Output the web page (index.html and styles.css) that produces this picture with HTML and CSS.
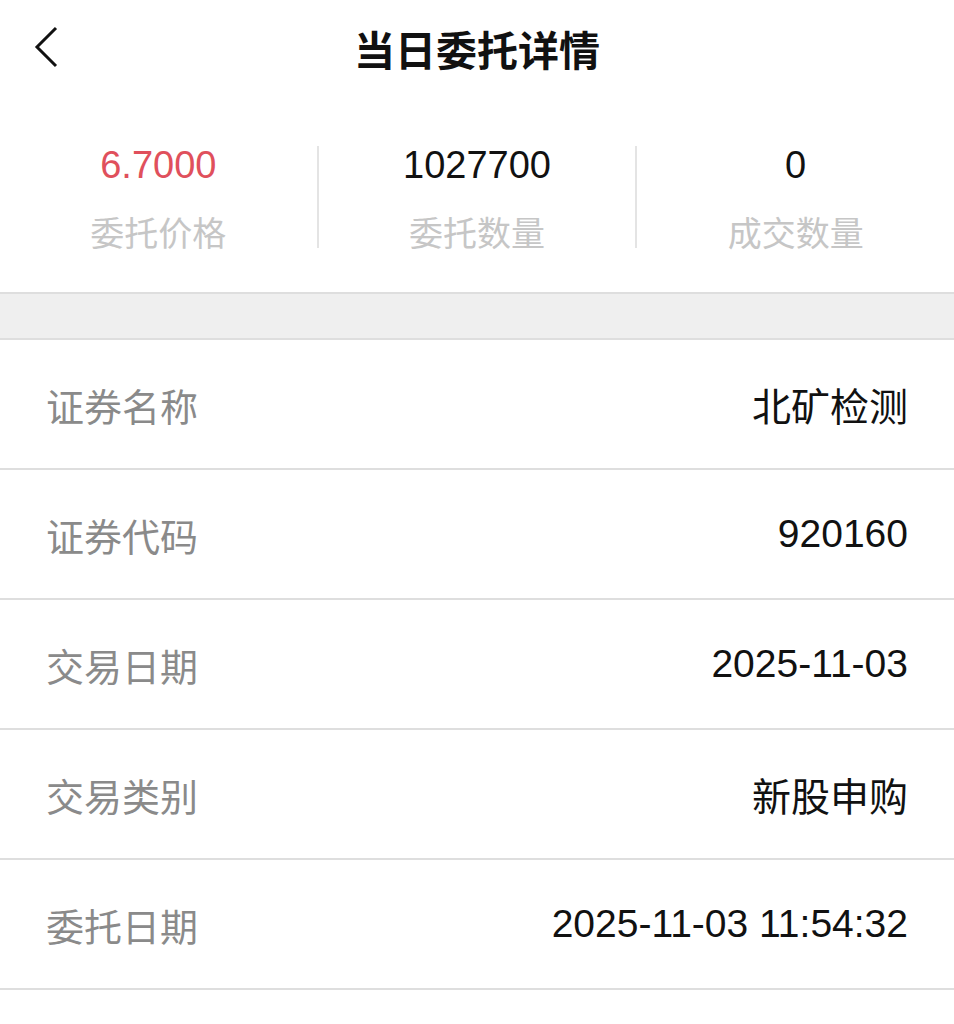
FILE: index.html
```html
<!DOCTYPE html>
<html lang="zh-CN">
<head>
  <meta charset="UTF-8">
  <link rel="stylesheet" href="styles.css">
</head>
<body>
  <div class="header">
    <span class="back">
      <svg width="26" height="42" viewBox="0 0 26 42"><polyline points="22,2 3,21 22,40" fill="none" stroke="#111" stroke-width="3"/></svg>
    </span>
    <h1>当日委托详情</h1>
  </div>

  <div class="summary">
    <div class="stat">
      <div class="num red">6.7000</div>
      <div class="cap">委托价格</div>
    </div>
    <div class="stat">
      <div class="num">1027700</div>
      <div class="cap">委托数量</div>
    </div>
    <div class="stat">
      <div class="num">0</div>
      <div class="cap">成交数量</div>
    </div>
  </div>

  <div class="band"></div>

  <div class="rows">
    <div class="row"><span class="label">证券名称</span><span class="value">北矿检测</span></div>
    <div class="row"><span class="label">证券代码</span><span class="value">920160</span></div>
    <div class="row"><span class="label">交易日期</span><span class="value">2025-11-03</span></div>
    <div class="row"><span class="label">交易类别</span><span class="value">新股申购</span></div>
    <div class="row"><span class="label">委托日期</span><span class="value">2025-11-03 11:54:32</span></div>
  </div>
</body>
</html>
```

FILE: styles.css
```css
body {
  margin: 0;
  background: #fff;
  font-family: "Liberation Sans", "Noto Sans CJK SC", sans-serif;
  color: #111;
}
.header {
  height: 96px;
  display: flex;
  align-items: center;
  justify-content: center;
  position: relative;
}
.back {
  position: absolute;
  left: 34px;
  top: 26px;
}
.header h1 {
  margin: 0;
  font-size: 41px;
  font-weight: bold;
  font-family: "Noto Sans CJK SC", sans-serif;
  color: #111;
}
.summary {
  display: flex;
  padding: 50px 0 44px;
}
.stat {
  flex: 1;
  text-align: center;
  border-left: 2px solid #e4e4e4;
  height: 102px;
}
.stat:first-child {
  border-left: none;
}
.num {
  font-size: 38px;
  line-height: 38px;
  color: #111;
}
.num.red {
  color: #e0505c;
}
.cap {
  font-family: "Noto Sans CJK SC", sans-serif;
  font-size: 34px;
  line-height: 40px;
  margin-top: 28px;
  color: #c6c6c6;
}
.band {
  height: 44px;
  background: #efefef;
  border-top: 2px solid #dedede;
  border-bottom: 2px solid #dedede;
}
.row {
  height: 128px;
  display: flex;
  align-items: center;
  justify-content: space-between;
  padding: 0 46px;
  border-bottom: 2px solid #dedede;
}
.label {
  font-family: "Noto Sans CJK SC", sans-serif;
  font-size: 38px;
  color: #8a8a8a;
}
.value {
  font-size: 39px;
  color: #111;
}
```
